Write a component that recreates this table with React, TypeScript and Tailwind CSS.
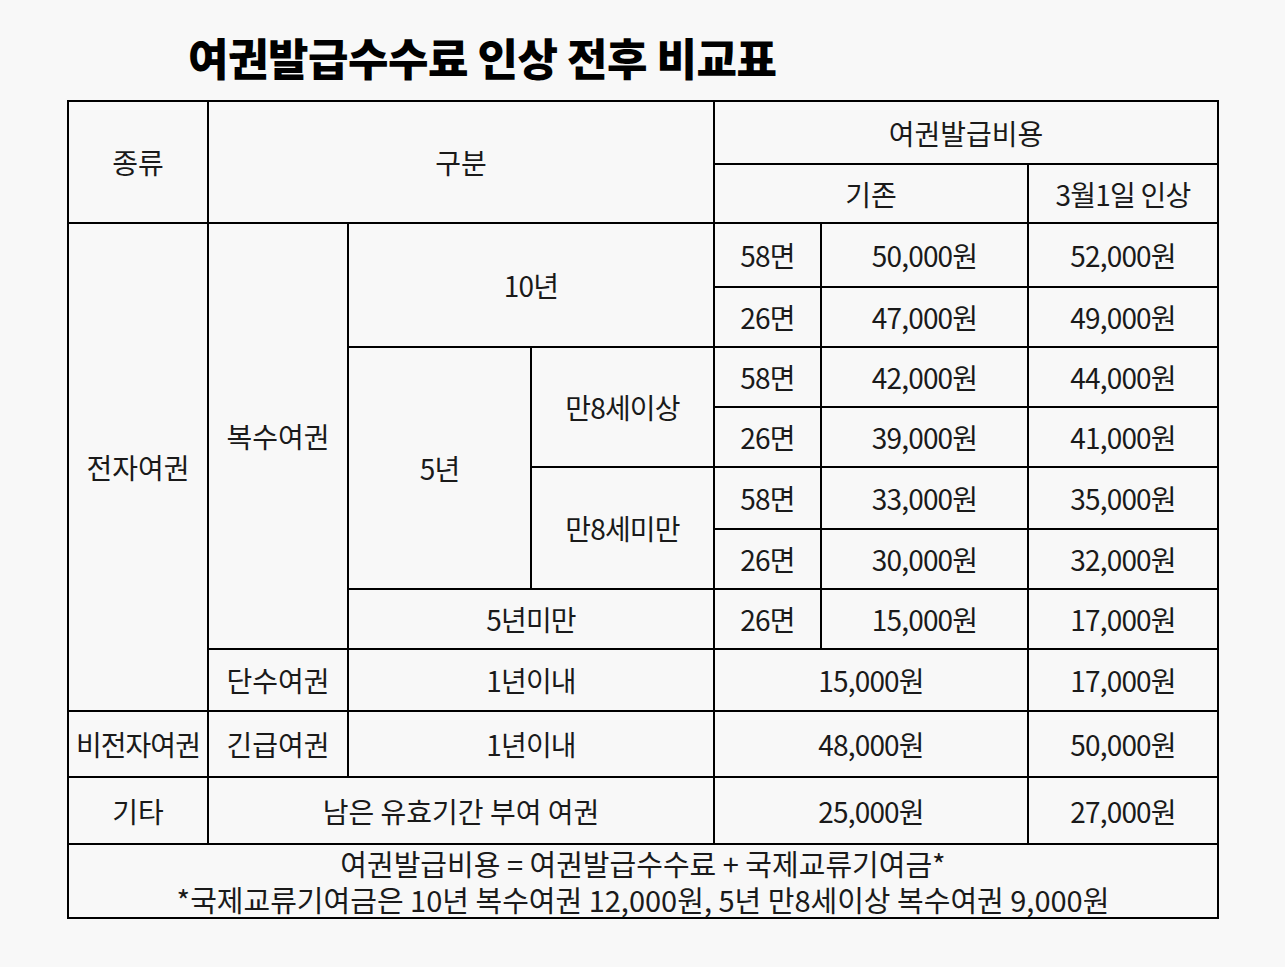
import React from 'react'

const cell = 'border-2 border-black text-center align-middle p-0'
const num = `${cell} tracking-[-0.8px]`

export default function App() {
    return (
        <div
            className="w-[1285px] h-[967px] bg-[#f8f8f8] text-[#1a1a1a]"
            style={{ fontFamily: '"Noto Sans CJK KR", "Noto Sans", sans-serif' }}
        >
            <div className="h-[100px] pl-[188px] pt-[33px]">
                <h1 className="text-[44px] leading-[48px] font-black text-black tracking-[-0.5px]">
                    여권발급수수료 인상 전후 비교표
                </h1>
            </div>

            <table className="ml-[67px] w-[1150px] table-fixed border-collapse text-[28px] leading-none">
                <colgroup>
                    <col className="w-[140px]" />
                    <col className="w-[140px]" />
                    <col className="w-[183px]" />
                    <col className="w-[183px]" />
                    <col className="w-[107px]" />
                    <col className="w-[207px]" />
                    <col className="w-[190px]" />
                </colgroup>
                <tbody>
                    <tr className="h-[63px]">
                        <td rowSpan={2} className={cell}>종류</td>
                        <td rowSpan={2} colSpan={3} className={cell}>구분</td>
                        <td colSpan={3} className={cell}>여권발급비용</td>
                    </tr>
                    <tr className="h-[59px]">
                        <td colSpan={2} className={cell}>기존</td>
                        <td className={num}>3월1일 인상</td>
                    </tr>

                    <tr className="h-[64px]">
                        <td rowSpan={8} className={cell}>전자여권</td>
                        <td rowSpan={7} className={cell}>복수여권</td>
                        <td rowSpan={2} colSpan={2} className={num}>10년</td>
                        <td className={num}>58면</td>
                        <td className={num}>50,000원</td>
                        <td className={num}>52,000원</td>
                    </tr>
                    <tr className="h-[60px]">
                        <td className={num}>26면</td>
                        <td className={num}>47,000원</td>
                        <td className={num}>49,000원</td>
                    </tr>
                    <tr className="h-[60px]">
                        <td rowSpan={4} className={num}>5년</td>
                        <td rowSpan={2} className={num}>만8세이상</td>
                        <td className={num}>58면</td>
                        <td className={num}>42,000원</td>
                        <td className={num}>44,000원</td>
                    </tr>
                    <tr className="h-[60px]">
                        <td className={num}>26면</td>
                        <td className={num}>39,000원</td>
                        <td className={num}>41,000원</td>
                    </tr>
                    <tr className="h-[62px]">
                        <td rowSpan={2} className={num}>만8세미만</td>
                        <td className={num}>58면</td>
                        <td className={num}>33,000원</td>
                        <td className={num}>35,000원</td>
                    </tr>
                    <tr className="h-[60px]">
                        <td className={num}>26면</td>
                        <td className={num}>30,000원</td>
                        <td className={num}>32,000원</td>
                    </tr>
                    <tr className="h-[60px]">
                        <td colSpan={2} className={num}>5년미만</td>
                        <td className={num}>26면</td>
                        <td className={num}>15,000원</td>
                        <td className={num}>17,000원</td>
                    </tr>
                    <tr className="h-[62px]">
                        <td className={cell}>단수여권</td>
                        <td colSpan={2} className={num}>1년이내</td>
                        <td colSpan={2} className={num}>15,000원</td>
                        <td className={num}>17,000원</td>
                    </tr>

                    <tr className="h-[66px]">
                        <td className={`${cell} tracking-[-1px]`}>비전자여권</td>
                        <td className={cell}>긴급여권</td>
                        <td colSpan={2} className={num}>1년이내</td>
                        <td colSpan={2} className={num}>48,000원</td>
                        <td className={num}>50,000원</td>
                    </tr>
                    <tr className="h-[67px]">
                        <td className={cell}>기타</td>
                        <td colSpan={3} className={cell}>남은 유효기간 부여 여권</td>
                        <td colSpan={2} className={num}>25,000원</td>
                        <td className={num}>27,000원</td>
                    </tr>

                    <tr className="h-[72px]">
                        <td colSpan={7} className={`${cell} text-[29px] leading-[36px]`}>
                            <div>여권발급비용 = 여권발급수수료 + 국제교류기여금*</div>
                            <div>*국제교류기여금은 10년 복수여권 12,000원, 5년 만8세이상 복수여권 9,000원</div>
                        </td>
                    </tr>
                </tbody>
            </table>
        </div>
    )
}
